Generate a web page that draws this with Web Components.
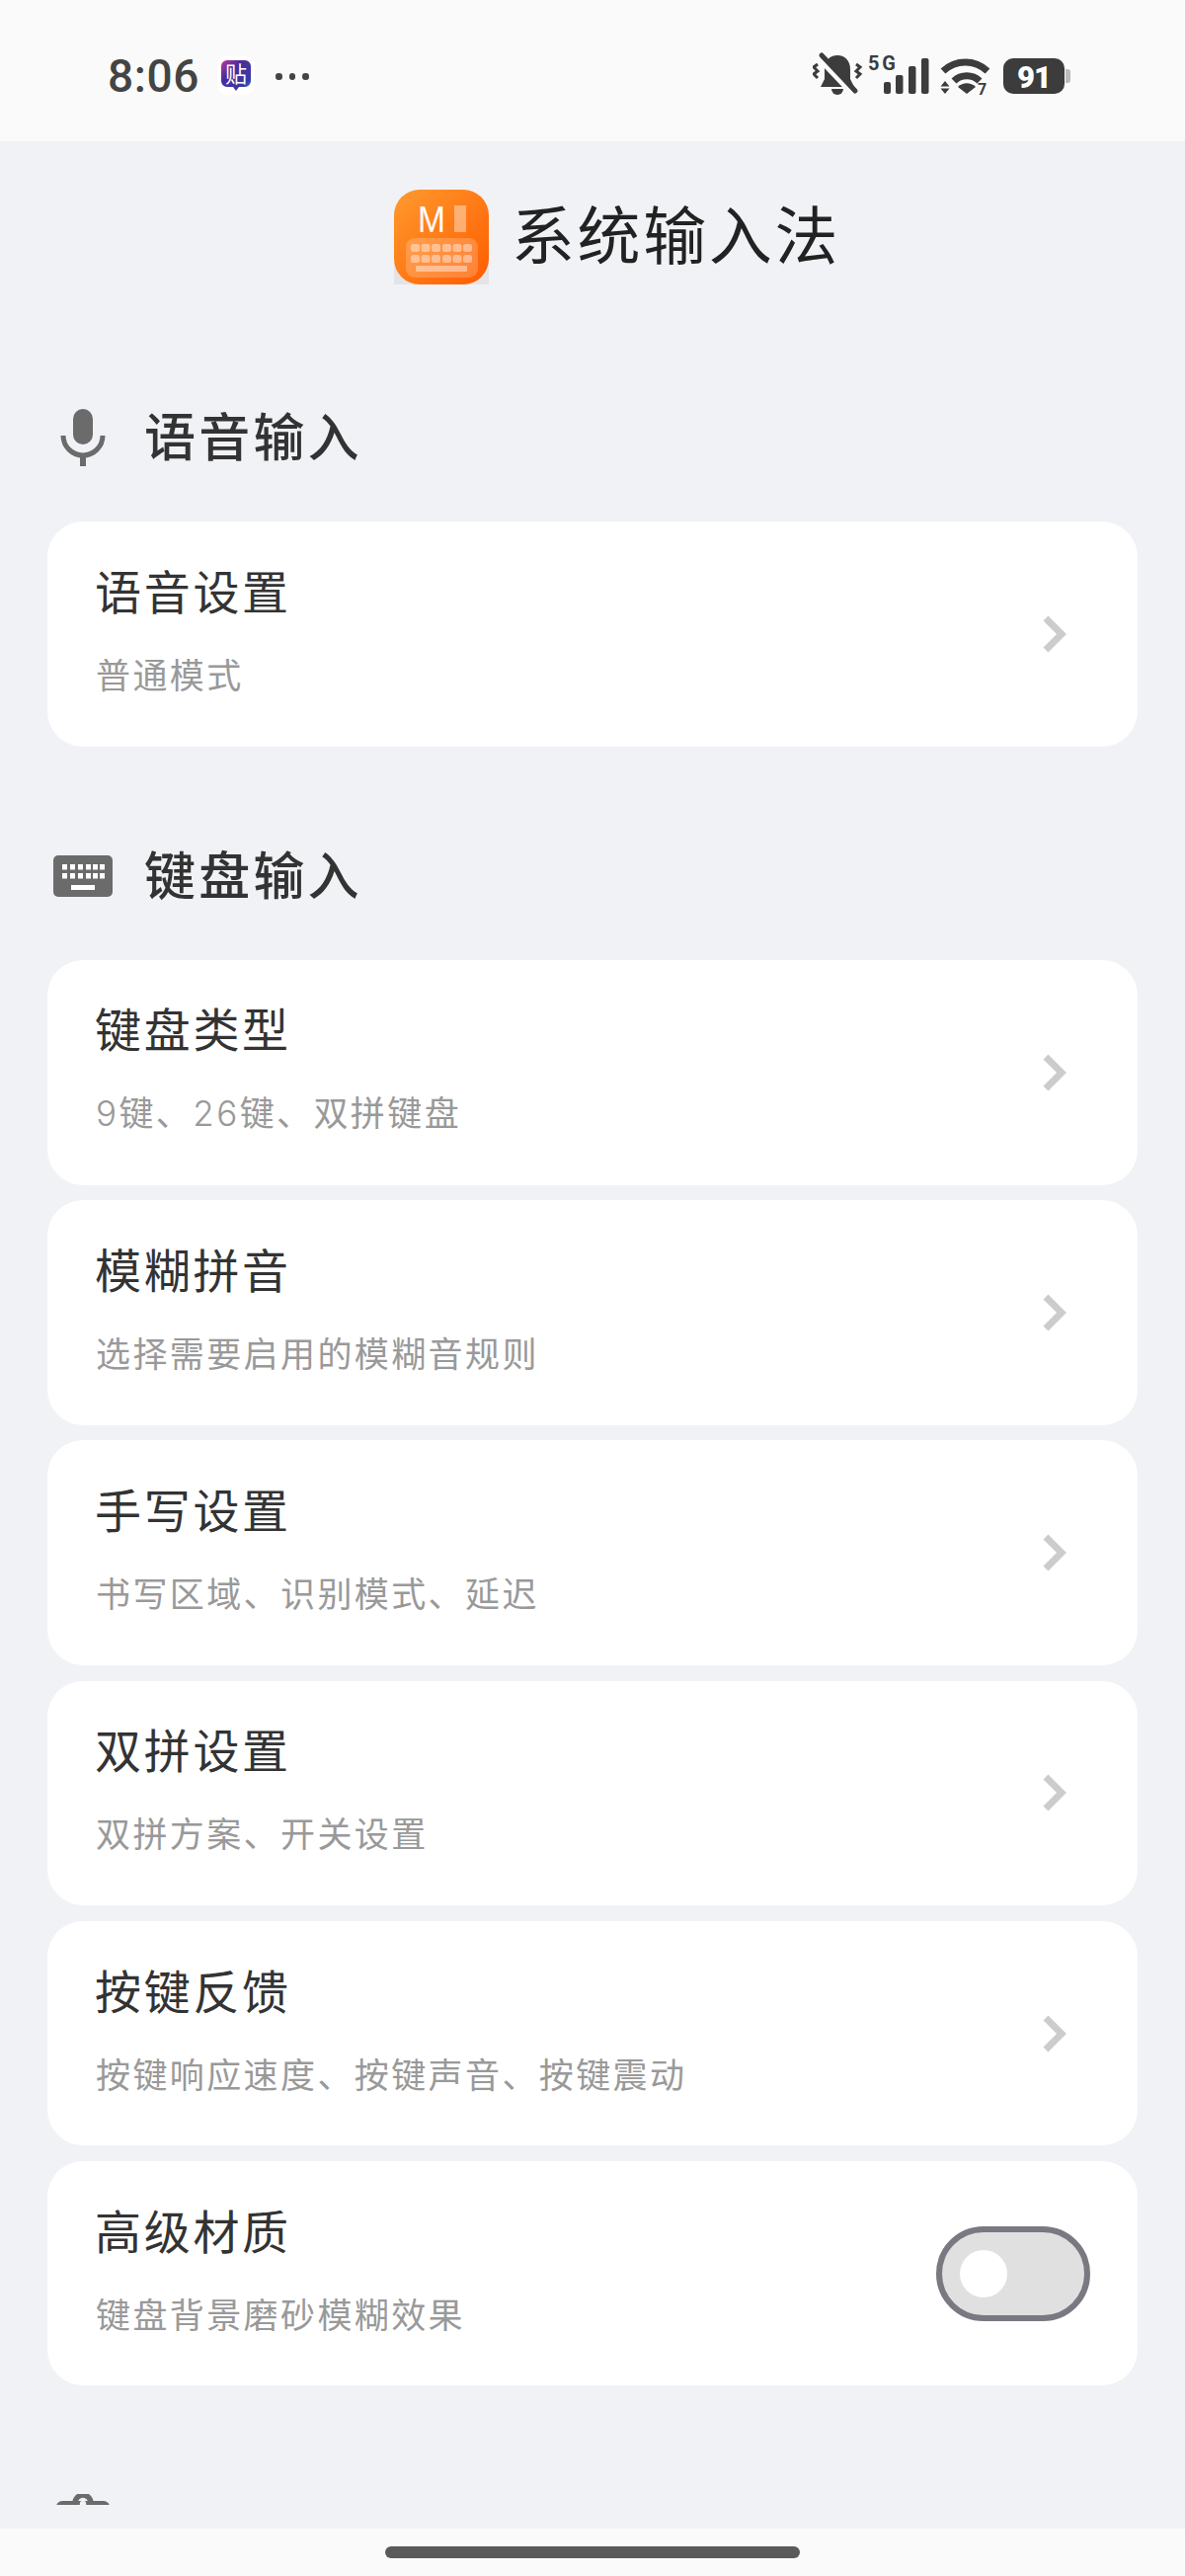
<!DOCTYPE html>
<html lang="zh">
<head>
<meta charset="utf-8">
<title>系统输入法</title>
<style>
  html, body { margin: 0; padding: 0; height: 2608px; background: #f0f2f6; }
  body { font-family: "Noto Sans CJK SC", "Noto Sans", sans-serif; }
</style>
</head>
<body>
<ime-app>
  <status-bar></status-bar>
  <app-title label="系统输入法"></app-title>

  <input-section label="语音输入">
    <svg slot="icon" width="60" height="60" viewBox="0 0 60 60">
      <rect x="20" y="1" width="20" height="36" rx="10" fill="#6b6b6b"/>
      <path d="M10 28a20 20 0 0 0 40 0" fill="none" stroke="#6b6b6b" stroke-width="5"/>
      <rect x="27" y="46" width="6" height="13" fill="#6b6b6b"/>
    </svg>
    <setting-row label="语音设置" sub="普通模式"><row-chevron></row-chevron></setting-row>
  </input-section>

  <input-section label="键盘输入">
    <svg slot="icon" width="60" height="42" viewBox="0 0 60 42">
      <rect width="60" height="42" rx="5" fill="#6b6b6b"/>
      <g fill="#fff">
        <rect x="9" y="9" width="5" height="5.500"/><rect x="17" y="9" width="5" height="5.500"/><rect x="25" y="9" width="5" height="5.500"/><rect x="33" y="9" width="5" height="5.500"/><rect x="40" y="9" width="5" height="5.500"/><rect x="47" y="9" width="5" height="5.500"/>
        <rect x="9" y="18" width="5" height="5.500"/><rect x="17" y="18" width="5" height="5.500"/><rect x="25" y="18" width="5" height="5.500"/><rect x="33" y="18" width="5" height="5.500"/><rect x="40" y="18" width="5" height="5.500"/><rect x="47" y="18" width="5" height="5.500"/>
        <rect x="18" y="30" width="24" height="5"/>
      </g>
    </svg>
    <setting-row label="键盘类型" sub="9键、26键、双拼键盘"><row-chevron></row-chevron></setting-row>
    <setting-row label="模糊拼音" sub="选择需要启用的模糊音规则"><row-chevron></row-chevron></setting-row>
    <setting-row label="手写设置" sub="书写区域、识别模式、延迟"><row-chevron></row-chevron></setting-row>
    <setting-row label="双拼设置" sub="双拼方案、开关设置"><row-chevron></row-chevron></setting-row>
    <setting-row label="按键反馈" sub="按键响应速度、按键声音、按键震动"><row-chevron></row-chevron></setting-row>
    <setting-row label="高级材质" sub="键盘背景磨砂模糊效果"><toggle-switch></toggle-switch></setting-row>
  </input-section>

  <input-section>
    <svg slot="icon" width="54" height="44" viewBox="0 0 54 44">
      <path d="M19 8a8 8 0 0 1 16 0" fill="none" stroke="#6b6b6b" stroke-width="5.5" transform="translate(0 1)"/>
      <path d="M0 13a6 6 0 0 1 6-6h42a6 6 0 0 1 6 6v31H0z" fill="#6b6b6b"/>
      <circle cx="27" cy="10" r="3.2" fill="#f0f2f6"/>
    </svg>
  </input-section>

  <nav-bar slot="nav"></nav-bar>
</ime-app>

<script>
class ImeApp extends HTMLElement {
  constructor() {
    super();
    this.shadowDOM = this.attachShadow({mode: 'open'});
  }

  connectedCallback() {
    this.shadowDOM.innerHTML = `
      <style>
        :host { display: flex; flex-direction: column; height: 2608px; overflow: hidden; background: #f0f2f6; }
        .scroll { height: 2393px; overflow: hidden; flex: none; }
        .gap { height: 24px; flex: none; }
      </style>
      <slot name="status"></slot>
      <div class="scroll"><slot></slot></div>
      <div class="gap"></div>
      <slot name="nav"></slot>
    `;
    // status bar sits above the scroll area
    this.querySelector('status-bar').setAttribute('slot', 'status');
  }
}

class StatusBar extends HTMLElement {
  constructor() {
    super();
    this.shadowDOM = this.attachShadow({mode: 'open'});
  }

  connectedCallback() {
    this.shadowDOM.innerHTML = `
      <style>
        :host { display: flex; align-items: flex-start; height: 143px; background: #fafafa; color: #444; box-sizing: border-box; padding: 0 115px 0 109px; flex: none; }
        .time { font: 500 46px/1 Roboto, sans-serif; margin-top: 54px; width: 111px; letter-spacing: .6px; color: #444; }
        .app { margin-top: 57px; display: block; }
        .dots { margin: 74px 0 0 21px; display: flex; gap: 7px; }
        .dots i { width: 6.5px; height: 6.5px; border-radius: 50%; background: #444; display: block; }
        .spacer { flex: 1; }
        .icons { margin-top: 50px; display: block; }
        text { font-family: Roboto, sans-serif; }
      </style>
      <span class="time">8:06</span>
      <svg class="app" width="38" height="39" viewBox="0 0 38 39">
        <defs>
          <linearGradient id="ag" x1="0" y1="0" x2="1" y2="1"><stop offset="0" stop-color="#c0399a"/><stop offset=".35" stop-color="#4a2c9a"/><stop offset=".8" stop-color="#3a3aa8"/><stop offset="1" stop-color="#1aa0e0"/></linearGradient>
        </defs>
        <rect width="38" height="39" rx="9" fill="#fff"/>
        <path d="M10 4h18a6 6 0 0 1 6 6v15a6 6 0 0 1-6 6h-6l-3 4-3-4h-6a6 6 0 0 1-6-6V10a6 6 0 0 1 6-6z" fill="url(#ag)"/>
        <text x="19" y="26" text-anchor="middle" font-size="22" fill="#fff" style="font-family:'Noto Sans CJK SC',sans-serif">贴</text>
      </svg>
      <div class="dots"><i></i><i></i><i></i></div>
      <div class="spacer"></div>
      <svg class="icons" width="262" height="50" viewBox="823 50 262 50">
        <!-- muted bell -->
        <path d="M848 56c-8 0-13 6-13 14v10l-4 8h34l-4-8V70c0-8-5-14-13-14z" fill="#3c3c3c"/>
        <path d="M842 90a6 6 0 0 0 12 0z" fill="#3c3c3c"/>
        <path d="M829 57l36 38" stroke="#fafafa" stroke-width="8"/>
        <path d="M832 56l34 36" stroke="#3c3c3c" stroke-width="5" stroke-linecap="round"/>
        <path d="M828 65l-4 3 4 4-4 3 4 4M867 65l4 3-4 4 4 3-4 4" fill="none" stroke="#3c3c3c" stroke-width="3"/>
        <!-- 5G and signal -->
        <text x="879" y="71" font-size="20" font-weight="700" fill="#3c3c3c" textLength="28">5G</text>
        <rect x="895" y="83" width="7" height="12" rx="2" fill="#3c3c3c"/>
        <rect x="907" y="76" width="7.500" height="19" rx="2" fill="#3c3c3c"/>
        <rect x="920" y="67" width="7.500" height="28" rx="2" fill="#3c3c3c"/>
        <rect x="933" y="59" width="7.500" height="36" rx="2" fill="#3c3c3c"/>
        <!-- wifi -->
        <path d="M955 72c13-12 32-12 45 0" fill="none" stroke="#3c3c3c" stroke-width="7"/>
        <path d="M966 82c7-7 19-7 26 0" fill="none" stroke="#3c3c3c" stroke-width="7"/>
        <path d="M970 88c5-5 13-5 18 0l-9 7z" fill="#3c3c3c"/>
        <path d="M957 82l-4.500 5.500h9zM957 95l-4.500-5.500h9z" fill="#3c3c3c"/>
        <text x="990" y="96" font-size="16" font-weight="700" fill="#3c3c3c">7</text>
        <!-- battery -->
        <rect x="1016" y="59" width="62" height="36" rx="10" fill="#3c3c3c"/>
        <path d="M1079 70h2a3 3 0 0 1 3 3v8a3 3 0 0 1-3 3h-2z" fill="#bbb"/>
        <text x="1047" y="88.500" text-anchor="middle" font-size="31" font-weight="900" letter-spacing="-1" fill="#fff">91</text>
      </svg>
    `;
  }
}

class AppTitle extends HTMLElement {
  constructor() {
    super();
    this.shadowDOM = this.attachShadow({mode: 'open'});
  }

  connectedCallback() {
    this.shadowDOM.innerHTML = `
      <style>
        :host { display: flex; align-items: center; padding: 49px 0 0 399px; }
        svg { display: block; flex: none; }
        .name { margin: 0 0 12px 23px; font: 400 64px/84px "Noto Sans CJK SC", sans-serif; letter-spacing: 2.6px; color: #222; }
      </style>
      <svg width="96" height="96" viewBox="0 0 96 96">
        <defs>
          <linearGradient id="lg" x1="0" y1="0" x2="1" y2="1"><stop offset="0" stop-color="#ff9a2e"/><stop offset="1" stop-color="#ff5c00"/></linearGradient>
        </defs>
        <rect y="60" width="96" height="36" fill="#e4e4e6"/>
        <rect width="96" height="96" rx="26" fill="url(#lg)"/>
        <text x="38" y="42.500" text-anchor="middle" font-size="36" textLength="28" lengthAdjust="spacingAndGlyphs" fill="#fff" style="font-family:'Liberation Sans',sans-serif">M</text>
        <rect x="61" y="16" width="12" height="27" fill="#fff" opacity=".4"/>
        <rect x="12" y="49" width="73" height="40" rx="9" fill="#fff" opacity=".2"/>
        <g fill="#fff" opacity=".42">
          <rect x="17" y="55" width="9" height="8" rx="2.500"/><rect x="27.500" y="55" width="9" height="8" rx="2.500"/><rect x="38" y="55" width="9" height="8" rx="2.500"/><rect x="49" y="55" width="9" height="8" rx="2.500"/><rect x="59.500" y="55" width="9" height="8" rx="2.500"/><rect x="70" y="55" width="9" height="8" rx="2.500"/>
          <rect x="17" y="66" width="9" height="8" rx="2.500"/><rect x="27.500" y="66" width="9" height="8" rx="2.500"/><rect x="38" y="66" width="9" height="8" rx="2.500"/><rect x="49" y="66" width="9" height="8" rx="2.500"/><rect x="59.500" y="66" width="9" height="8" rx="2.500"/><rect x="70" y="66" width="9" height="8" rx="2.500"/>
          <rect x="22" y="77" width="52" height="6" rx="1"/>
        </g>
      </svg>
      <span class="name">${this.getAttribute('label')}</span>
    `;
  }
}

class InputSection extends HTMLElement {
  constructor() {
    super();
    this.shadowDOM = this.attachShadow({mode: 'open'});
  }

  connectedCallback() {
    this.shadowDOM.innerHTML = `
      <style>
        :host { display: block; padding: 99.5px 48px 0; }
        :host(:nth-of-type(1)) { padding-top: 123px; }
        .head { display: flex; align-items: center; height: 64px; margin-bottom: 53px; }
        .icon { width: 98px; display: flex; justify-content: center; flex: none; box-sizing: border-box; padding-right: 26px; }
        h2 { margin: 0 0 6px; font: 500 52px/58px "Noto Sans CJK SC", sans-serif; letter-spacing: 3.2px; color: #333; }
        .rows { display: flex; flex-direction: column; gap: 15.7px; }
      </style>
      <div class="head">
        <div class="icon"><slot name="icon"></slot></div>
        ${this.hasAttribute('label') ? `<h2>${this.getAttribute('label')}</h2>` : ''}
      </div>
      <div class="rows"><slot></slot></div>
    `;
  }
}

class SettingRow extends HTMLElement {
  constructor() {
    super();
    this.shadowDOM = this.attachShadow({mode: 'open'});
  }

  connectedCallback() {
    // digits run wider than the CJK font gives them
    const sub = this.getAttribute('sub').replace(/\d+/g, '<span class="num">$&</span>');
    this.shadowDOM.innerHTML = `
      <style>
        :host { display: flex; align-items: center; height: 227.5px; box-sizing: border-box; padding: 0 48px 0 49px; background: #fff; border-radius: 36px; }
        .text { flex: 1; padding-bottom: 13px; }
        .title { font: 400 47px/64px "Noto Sans CJK SC", sans-serif; letter-spacing: 2.7px; color: #333; margin-left: -1px; }
        .sub { font: 400 35px/48px "Noto Sans CJK SC", sans-serif; letter-spacing: 2.4px; color: #999; margin-top: 29px; }
        .num { font-family: Inter, sans-serif; font-weight: 300; }
      </style>
      <div class="text">
        <div class="title">${this.getAttribute('label')}</div>
        <div class="sub">${sub}</div>
      </div>
      <slot></slot>
    `;
  }
}

class RowChevron extends HTMLElement {
  constructor() {
    super();
    this.shadowDOM = this.attachShadow({mode: 'open'});
  }

  connectedCallback() {
    this.shadowDOM.innerHTML = `
      <style>
        :host { display: block; margin-right: 24px; height: 38px; }
        svg { display: block; }
      </style>
      <svg width="24" height="38" viewBox="0 0 24 38">
        <path d="M3 3l16 16L3 35" fill="none" stroke="#ccc" stroke-width="7"/>
      </svg>
    `;
  }
}

class ToggleSwitch extends HTMLElement {
  constructor() {
    super();
    this.shadowDOM = this.attachShadow({mode: 'open'});
  }

  connectedCallback() {
    this.shadowDOM.innerHTML = `
      <style>
        :host { display: flex; align-items: center; width: 156px; height: 96px; box-sizing: border-box; border: 6px solid #7a7880; border-radius: 48px; background: #e0e0e0; padding-left: 18px; }
        i { display: block; width: 48px; height: 48px; border-radius: 50%; background: #fff; }
      </style>
      <i></i>
    `;
  }
}

class NavBar extends HTMLElement {
  constructor() {
    super();
    this.shadowDOM = this.attachShadow({mode: 'open'});
  }

  connectedCallback() {
    this.shadowDOM.innerHTML = `
      <style>
        :host { display: flex; justify-content: center; height: 48px; background: #fafafa; padding-top: 18px; box-sizing: border-box; flex: none; }
        i { display: block; width: 420px; height: 12px; border-radius: 6px; background: #5a5a5a; }
      </style>
      <i></i>
    `;
  }
}

customElements.define('ime-app', ImeApp);
customElements.define('status-bar', StatusBar);
customElements.define('app-title', AppTitle);
customElements.define('input-section', InputSection);
customElements.define('setting-row', SettingRow);
customElements.define('row-chevron', RowChevron);
customElements.define('toggle-switch', ToggleSwitch);
customElements.define('nav-bar', NavBar);
</script>
</body>
</html>
